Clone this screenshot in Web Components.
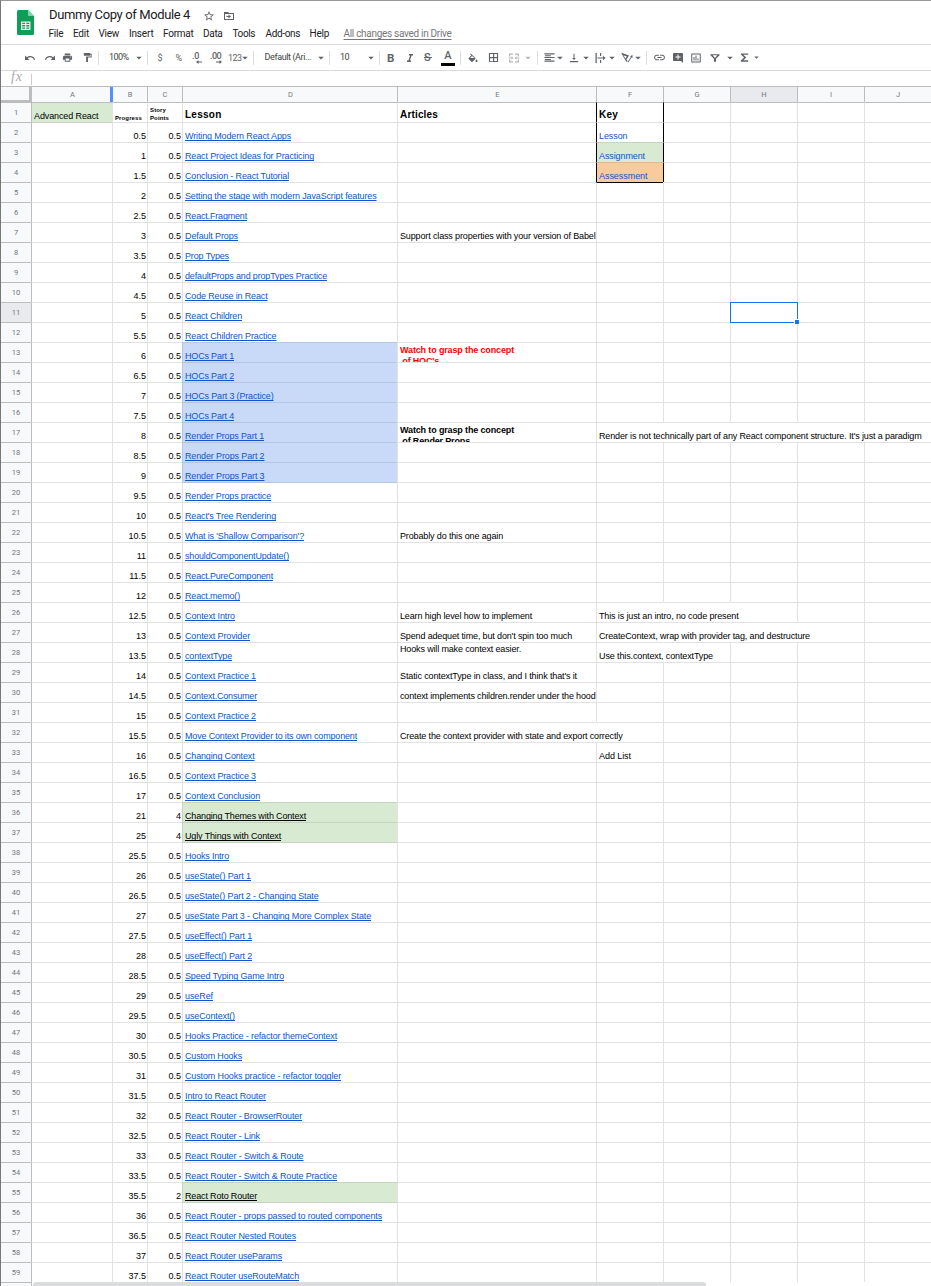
<!DOCTYPE html>
<html lang="en">
<head>
<meta charset="utf-8">
<title>Dummy Copy of Module 4</title>
<style>
html,body{margin:0;padding:0;background:#fff}
body{width:931px;height:1286px;overflow:hidden;font-family:"Liberation Sans",Arial,sans-serif}
</style>
</head>
<body>
<sheet-app></sheet-app>
<script>
const make = (host, html) => { const r = host.attachShadow({mode:'open'}); r.innerHTML = html; return r; };

/* Text run whose tracking is tuned to a fixed advance width. */
class FitText extends HTMLElement {
  connectedCallback(){
    if(!this.shadowRoot) make(this, `<style>:host{display:inline-block;white-space:pre}</style><slot></slot>`);
    const w = +this.getAttribute('w'); if(!w) return;
    this.style.letterSpacing = '0px';
    const nat = this.getBoundingClientRect().width, n = this.textContent.length;
    this.style.letterSpacing = ((w - nat) / n).toFixed(4) + 'px';
  }
}
customElements.define('fit-text', FitText);

const ICONS = {
  undo:'<path d="M12.5 8c-2.65 0-5.05.99-6.9 2.6L2 7v9h9l-3.62-3.62c1.39-1.16 3.16-1.88 5.12-1.88 3.54 0 6.55 2.31 7.6 5.5l2.37-.78C21.08 11.03 17.15 8 12.5 8z"/>',
  redo:'<path d="M18.4 10.6C16.55 8.99 14.15 8 11.5 8c-4.65 0-8.58 3.03-9.96 7.22L3.9 16c1.05-3.19 4.05-5.5 7.6-5.5 1.95 0 3.73.72 5.12 1.88L13 16h9V7l-3.6 3.6z"/>',
  print:'<path d="M19 8H5c-1.66 0-3 1.34-3 3v6h4v4h12v-4h4v-6c0-1.66-1.34-3-3-3zm-3 11H8v-5h8v5zm3-7c-.55 0-1-.45-1-1s.45-1 1-1 1 .45 1 1-.45 1-1 1zm-1-9H6v4h12V3z"/>',
  paint:'<path d="M18 4V3c0-.55-.45-1-1-1H5c-.55 0-1 .45-1 1v4c0 .55.45 1 1 1h12c.55 0 1-.45 1-1V6h1v4H9v11c0 .55.45 1 1 1h2c.55 0 1-.45 1-1v-9h8V4h-3z"/>',
  italic:'<path d="M10 4v3h2.2l-3.4 10H6v3h8v-3h-2.2l3.4-10H18V4z"/>',
  fill:'<path d="M16.56 8.94L7.62 0 6.21 1.41l2.38 2.38-5.15 5.15c-.59.59-.59 1.54 0 2.12l5.5 5.5c.29.29.68.44 1.06.44s.77-.15 1.06-.44l5.5-5.5c.59-.58.59-1.53 0-2.12zM6.500 9L10 5.21 14.79 9H6.500zM19 11.5s-2 2.17-2 3.5c0 1.1.9 2 2 2s2-.9 2-2c0-1.33-2-3.5-2-3.5z" transform="translate(0 3)"/>',
  borders:'<path d="M2 2v20h20V2H2zm9 18H4.500v-6.500H11V20zm0-9H4.500V4.500H11V11zm8.500 8.500h-6v-6h6v6zm0-8.500h-6V4.500h6V11z"/>',
  merge:'<path d="M2 3h8v2.500H4.500V9H2zM14 3h8v6h-2.500V5.500H14zM2 15h2.500v3.500H10V21H2zM19.500 15H22v6h-8v-2.500h5.500zM1 11h6V8.500l4 3.500-4 3.500V13H1zM23 11h-6V8.500L13 12l4 3.500V13h6z"/>',
  left:'<path d="M15 15H2v2.400h13zM15 7H2v2.400h13zM1 13.200h22v-2.400H1zM1 21.200h22v-2.400H1zM1 2.800v2.400h22V2.800z"/>',
  valign:'<path d="M16.500 12H13.200V2h-2.400v10H7.500l4.500 5zM2 19v3h20v-3z"/>',
  wrap:'<path d="M3 2h2.500v20H3zM12 2h2.300v6H12zM12 16h2.300v6H12zM7 11h11V7.500l5 4.500-5 4.500V13H7z"/>',
  rotate:'<path d="M1 3l10 17 2-1.500-2-3.500 5-8 -15-5.500zM5 6.500l6.500 2.500-2.700 4zM13 20l7-10-2-1.300 5-2.700v6l-1.700-1.200-6.500 9.500z"/>',
  link:'<path d="M3.900 12c0-1.710 1.390-3.100 3.100-3.100h4V7H7c-2.760 0-5 2.240-5 5s2.240 5 5 5h4v-1.900H7c-1.710 0-3.100-1.390-3.100-3.100zM8 13h8v-2H8v2zm9-6h-4v1.900h4c1.710 0 3.100 1.390 3.100 3.100s-1.390 3.100-3.100 3.100h-4V17h4c2.760 0 5-2.240 5-5s-2.240-5-5-5z"/>',
  comment:'<path d="M22 4c0-1.100-.9-2-2-2H4c-1.100 0-2 .9-2 2v12c0 1.100.9 2 2 2h14l4 4V4zM17 11h-4v4h-2v-4H7V9h4V5h2v4h4v2z"/>',
  chart:'<path d="M9 17H7v-7h2v7zm4 0h-2V7h2v10zm4 0h-2v-4h2v4zm2.500 2.100h-15V5h15v14.100zm0-16.100h-15c-1.100 0-2 .9-2 2v14c0 1.100.9 2 2 2h15c1.100 0 2-.9 2-2V5c0-1.100-.9-2-2-2z"/>',
  filter:'<path fill-rule="evenodd" d="M1 3h22v2.500L14.500 14v7h-5v-7L1 5.500zM6.500 5.500L12 12l5.500-6.500z"/>',
  sigma:'<path d="M20 3H4v2.500l7 6.500-7 6.500V21h16v-3H9.500l6.500-6-6.500-6H20z"/>',
  arrow:'<path d="M1 7h22L12 18z"/>',
  star:'<path d="M22 9.240l-7.190-.62L12 2 9.190 8.630 2 9.240l5.460 4.730L5.820 21 12 17.270 18.180 21l-1.630-7.030L22 9.240zM12 15.400l-3.760 2.270 1-4.280-3.320-2.880 4.380-.38L12 6.100l1.710 4.040 4.380.38-3.320 2.880 1 4.280L12 15.400z"/>',
  folder:'<path fill-rule="evenodd" d="M2 4h8l2 2h10v14H2zM4 8v10h16V8zM11 9l5 4-5 4v-3H7v-2h4z"/>'
};
class ToolIcon extends HTMLElement {
  connectedCallback(){
    const s = this.getAttribute('size') || 12;
    make(this, `<style>:host{display:block;flex:none;width:${s}px;height:${s}px}svg{display:block;fill:currentColor}</style>
      <svg width="${s}" height="${s}" viewBox="0 0 24 24">${ICONS[this.getAttribute('name')]}</svg>`);
  }
}
customElements.define('tool-icon', ToolIcon);

class DocHeader extends HTMLElement {
  connectedCallback(){
    const menu = [['File',15,9.500],['Edit',16,9.500],['View',20.500,10],['Insert',24.500,9.500],['Format',30.500,9.500],['Data',19.500,10],['Tools',22.500,10.500],['Add-ons',34.500,9.500],['Help',19.500,14.500]];
    make(this, `<style>
      :host{display:flex;height:43px;border-bottom:1px solid #dadada;font-family:Roboto,sans-serif;color:#202124}
      .logo{flex:none;width:17px;height:25px;margin:9px 15px 0 16px}
      .main{display:flex;flex-direction:column}
      .title{display:flex;align-items:center;height:20px;padding-top:4px;font-size:13px;line-height:20px}
      .title tool-icon{color:#5f6368}
      tool-icon[name=star]{margin:2px 8px 0 13px}
      tool-icon[name=folder]{margin-top:2px}
      nav{display:flex;font-size:10px;line-height:14px;padding-top:2px;margin-left:-.5px}
      .saved{color:#777;text-decoration:underline;text-decoration-skip-ink:none;text-underline-offset:2px}
      </style>
      <svg class="logo" viewBox="0 0 17 25"><path fill="#0f9d58" d="M1.500 0H11l6 6v17.500a1.500 1.500 0 0 1-1.500 1.500h-14A1.500 1.500 0 0 1 0 23.500v-22A1.500 1.500 0 0 1 1.500 0z"/><path fill="#87ceac" d="M11 0l6 6h-5a1 1 0 0 1-1-1z"/><path fill="#f1f1f1" fill-rule="evenodd" d="M4 11.500h9.500v8.500H4zM5.200 12.700v1.300h2.900v-1.300zm4.100 0v1.300h3v-1.300zM5.200 15.100v1.300h2.900v-1.300zm4.100 0v1.300h3v-1.300zM5.200 17.500v1.300h2.900v-1.300zm4.100 0v1.300h3v-1.300z"/></svg>
      <div class="main"><div class="title"><fit-text w="141">Dummy Copy of Module 4</fit-text><tool-icon name="star" size="12"></tool-icon><tool-icon name="folder" size="12"></tool-icon></div>
      <nav>${menu.map(([t,w,g])=>`<fit-text w="${w}" style="margin-right:${g}px">${t}</fit-text>`).join('')}<fit-text class="saved" w="108">All changes saved in Drive</fit-text></nav></div>`);
  }
}
customElements.define('doc-header', DocHeader);

class ToolBar extends HTMLElement {
  connectedCallback(){
    const i=(g,n,s=12,c='')=>`<tool-icon name="${n}" size="${s}" class="${c}" style="margin-left:${g}px"></tool-icon>`;
    const a=(g,c='')=>i(g,'arrow',6,c);
    const s=g=>`<i class="sep" style="margin-left:${g}px"></i>`;
    const t=(g,x,w,c='')=>`<fit-text class="${c}" w="${w}" style="margin-left:${g}px">${x}</fit-text>`;
    make(this, `<style>
      :host{display:flex;align-items:center;height:25px;border-bottom:1px solid #dadada;padding-left:23px;font:9px/12px Roboto,sans-serif;color:#5f6368}
      .sep{flex:none;width:1px;height:14px;background:#dadce0}
      .faint{opacity:.45}
      .up{margin-top:-2px;color:#444}
      .dec{display:flex;flex-direction:column;align-items:flex-end;line-height:8px;height:12px;font-weight:500}
      .dec svg{display:block}
      .b{font-size:11.500px;font-weight:700}
      .strike{text-decoration:line-through;font-weight:500;font-size:11px}
      .color{display:flex;flex-direction:column;align-items:center;box-sizing:border-box;width:14px;height:16px;font-size:11px;line-height:11px;font-weight:500;border-bottom:3px solid #000}
      </style>
      ${i(0,'undo')}${i(8,'redo')}${i(6,'print',11)}${i(9,'paint',11)}${s(5)}${t(10,'100%',19.500,'up')}${a(7.500)}${s(5)}
      ${t(9.500,'$',5.500)}${t(12.500,'%',7)}
      <span class="dec" style="margin-left:9.500px"><fit-text w="7">.0</fit-text><svg width="6" height="4" style="margin-right:-3px"><path d="M0 2l2.500-2v1.500H6v1H2.500V4z" fill="#5f6368"/></svg></span>
      <span class="dec" style="margin-left:11px"><fit-text w="11">.00</fit-text><svg width="6" height="4" style="margin-right:-1px"><path d="M6 2L3.500 0v1.500H0v1h3.500V4z" fill="#5f6368"/></svg></span>
      ${t(7,'123',13.500)}${a(.5)}${s(5)}${t(10.500,'Default (Ari...',46.500,'up')}${a(7)}${s(5)}
      ${t(10,'10',9,'up')}${a(19)}${s(5)}${t(7,'B',8,'b')}${i(9,'italic',12)}${t(8,'S',8,'strike')}
      <span class="color" style="margin-left:9px">A</span>${s(5)}${i(6,'fill')}${i(9,'borders',11)}${i(8.500,'merge',12,'faint')}${a(5.500,'faint')}${s(6)}
      ${i(5.500,'left',11)}${a(2.500)}${i(6,'valign',10)}${a(4)}${i(5,'wrap',12)}${a(3)}${i(5.500,'rotate',12)}${a(2.500)}${s(5)}
      ${i(5.500,'link',13)}${i(6.500,'comment',12)}${i(6,'chart',12)}${i(8,'filter',10)}${a(7)}${i(6,'sigma',11)}${i(4,'arrow',5)}`);
  }
}
customElements.define('tool-bar', ToolBar);

class FormulaBar extends HTMLElement {
  connectedCallback(){
    make(this, `<style>:host{display:flex;align-items:center;height:15px;padding-left:10px;color:#aaa;font:italic 14px/14px "Liberation Serif",serif}
      i{width:1px;height:11px;background:#ccc;margin-left:8px;margin-top:1px}fit-text{margin-top:-3px}</style><fit-text w="12">fx</fit-text><i></i>`);
  }
}
customElements.define('formula-bar', FormulaBar);

const COLS = 'ABCDEFGHIJ'.split('');
const TRACKS = '30px 81px 35px 35px 215px 199px 67px 67px 67px 67px 67px';

class ColumnHeads extends HTMLElement {
  connectedCallback(){
    make(this, `<style>:host{display:grid;grid-template-columns:${TRACKS};height:15px;border-top:1px solid #bdbdbd;background:#f8f9fa;font:7.500px/16px Roboto,sans-serif;color:#777;text-align:center}
      div{box-sizing:border-box;border-left:1px solid #bdbdbd}
      .corner{border-left:0;border-right:2px solid #bdbdbd;border-bottom:3px solid #bdbdbd}
      .A{border-right:2px solid #4d90fe;padding-left:3px}.B{border-left-color:#4d90fe}.D,.E{padding-left:1px}.H{background:#e8eaed}</style>
      <div class="corner"></div>${COLS.map(c=>`<div class="${c}">${c}</div>`).join('')}`);
  }
}
customElements.define('column-heads', ColumnHeads);

class SheetCell extends HTMLElement {
  connectedCallback(){
    make(this, `<style>
      :host{display:flex;box-sizing:border-box;height:20px;min-width:0;border:0 solid #e2e2e2;border-width:1px 0 0 1px;padding-left:2px;white-space:pre;align-items:flex-end;font-size:9px;line-height:12px;color:#000}
      :host([head]){justify-content:center;align-items:center;border-left:0;border-color:#bdbdbd;background:#f8f9fa;color:#70757a;font:7.500px/10px Roboto,sans-serif;padding:0}
      :host([head=on]){background:#e8eaed}
      :host([num]){justify-content:flex-end;padding-right:1px}
      :host([fill=green]){background:#d9ead3}:host([fill=blue]){background:#c9daf8}:host([fill=orange]){background:#f9cb9c}
      :host([link]) ::slotted(*),:host([keyed]){color:#1155cc}
      :host([link]) ::slotted(*){text-decoration:underline;text-decoration-skip-ink:none;text-underline-offset:1px;text-decoration-thickness:1px}
      :host([link=dark]) ::slotted(*){color:#000}
      :host([title1]){font-weight:700;font-size:10px;padding-bottom:1px}
      :host([tiny]){font-weight:700;font-size:6px;line-height:8px}
      :host([clip]){align-items:flex-start;font-weight:700;line-height:11px;overflow:hidden;padding-top:2px}
      :host([high]){align-items:flex-start}
      </style><slot></slot>`);
  }
}
customElements.define('sheet-cell', SheetCell);

class SheetRow extends HTMLElement {
  constructor(){ super(); make(this, `<style>:host{display:grid;grid-template-columns:${TRACKS};height:20px}</style><slot></slot>`); }
}
customElements.define('sheet-row', SheetRow);

const LESSONS = [['Writing Modern React Apps',291],['React Project Ideas for Practicing',314],['Conclusion - React Tutorial',289],['Setting the stage with modern JavaScript features',376.500],['React.Fragment',247],['Default Props',238],['Prop Types',229],['defaultProps and propTypes Practice',327],['Code Reuse in React',267.500],['React Children',242],['React Children Practice',276.500],['HOCs Part 1',234],['HOCs Part 2',234],['HOCs Part 3 (Practice)',273.500],['HOCs Part 4',234],['Render Props Part 1',264],['Render Props Part 2',264.500],['Render Props Part 3',264.500],['Render Props practice',271],["React's Tree Rendering",276],["What is 'Shallow Comparison'?",304],['shouldComponentUpdate()',289],['React.PureComponent',273],['React.memo()',240],['Context Intro',235],['Context Provider',250],['contextType',232],['Context Practice 1',256],['Context.Consumer',257],['Context Practice 2',256],['Move Context Provider to its own component',357],['Changing Context',254.500],['Context Practice 3',256],['Context Conclusion',260],['Changing Themes with Context',306],['Ugly Things with Context',281],['Hooks Intro',229],['useState() Part 1',251],['useState() Part 2 - Changing State',318.500],['useState Part 3 - Changing More Complex State',371],['useEffect() Part 1',252],['useEffect() Part 2',252],['Speed Typing Game Intro',284],['useRef',213],['useContext()',235],['Hooks Practice - refactor themeContext',337],['Custom Hooks',242],['Custom Hooks practice - refactor toggler',341],['Intro to React Router',266],['React Router - BrowserRouter',302],['React Router - Link',260],['React Router - Switch & Route',303.500],['React Router - Switch & Route Practice',337],['React Roto Router',257],['React Router - props passed to routed components',382],['React Router Nested Routes',296],['React Router useParams',282],['React Router useRouteMatch',299]];
const POINTS = {36:4,37:4,55:2};
const EXTRA = {
  E7:['Support class properties with your version of Babel',195.500],
  E13:['Watch to grasp the concept',114," of HOC's",39,'clip','red'],
  E17:['Watch to grasp the concept',114,' of Render Props',70,'clip'],
  F17:["Render is not technically part of any React component structure. It's just a paradigm",322.500],
  E22:['Probably do this one again',103],E26:['Learn high level how to implement',132],F26:['This is just an intro, no code present',139.500],
  E27:["Spend adequet time, but don't spin too much",172],F27:['CreateContext, wrap with provider tag, and destructure',211],
  E28:['Hooks will make context easier.',121],F28:['Use this.context, contextType',114],
  E29:["Static contextType in class, and I think that's it",177],E30:['context implements children.render under the hood',195.500],
  E32:['Create the context provider with state and export correctly',222.500],F33:['Add List',32]
};
/* Cells whose left grid line is covered by text running over from the left. */
const HIDDEN = ['G17','H17','I17','J17','G26','H26','G27','H27','I27','G28','F32'];
const fillOf = (c,r) => c==='D' ? (r>=13&&r<=19?'blue':[36,37,55].includes(r)?'green':'') : c==='F' ? (r===3?'green':r===4?'orange':'') : c==='A'&&r===1?'green':'';
const EDGE = {green:'#c5d4bf',blue:'#b6c6e1',orange:'#e2b88e'};

class SheetGrid extends HTMLElement {
  connectedCallback(){
    let total = 0, html = '';
    const fit = (t,w)=>`<fit-text w="${w}">${t.replace('&','&amp;')}</fit-text>`;
    for(let r=1;r<=59;r++){
      html += `<sheet-row><sheet-cell head${r===11?'=on':''}>${r}</sheet-cell>`;
      const pts = POINTS[r]||0.5; if(r>1) total += pts;
      for(const c of COLS){
        const k=c+r, f=fillOf(c,r), up=r>1&&fillOf(c,r-1); let at='', st='', body='';
        if(f){ at+=` fill="${f}"`; st+=`border-color:${EDGE[f]};`; }
        else if(up) st+=`border-top-color:${EDGE[up]};`;
        if(c==='A') st+='border-left-color:#bdbdbd;';
        if(r===1) st+='border-top-color:#bdbdbd;';
        if(HIDDEN.includes(k)) st+='border-left-color:transparent;';
        if((c==='F'||c==='G')&&r<=4) st+='border-left-color:#000;';
        if(c==='F'&&r===5) st+='border-top-color:#000;border-left-color:#e2e2e2;';
        if(r===1){
          if(c==='A') body=fit('Advanced React',64.500);
          if(c==='B'){at+=' tiny';body=fit('Progress',27);}
          if(c==='C'){at+=' tiny';body=`<div>${fit('Story',16)}<br>${fit('Points',19)}</div>`;}
          if(c==='D'){at+=' title1';body=fit('Lesson',36.500);}
          if(c==='E'){at+=' title1';body=fit('Articles',38);}
          if(c==='F'){at+=' title1';body=fit('Key',19);}
        } else {
          if(c==='B'){at+=' num';body=total;}
          if(c==='C'){at+=' num';body=pts;}
          if(c==='D'){const [t,x]=LESSONS[r-2];at+=` link="${POINTS[r]?'dark':'blue'}"`;body=fit(t,x-185);}
          if(c==='F'&&r<5){at+=' keyed';body=[fit('Lesson',28.500),fit('Assignment',46),fit('Assessment',48.500)][r-2];}
        }
        const e=EXTRA[k];
        if(e){ if(e[4]){at+=' clip'; if(e[5]) st+='color:red;'; body=`<div>${fit(e[0],e[1])}<br>${fit(e[2],e[3])}</div>`; } else body=fit(e[0],e[1]); }
        if(k==='E28') at+=' high';
        html += `<sheet-cell${at}${st?` style="${st}"`:''}>${body}</sheet-cell>`;
      }
      html += '</sheet-row>';
    }
    make(this, `<style>:host{display:block;position:relative}
      .sel{position:absolute;left:729px;top:200px;width:66px;height:19px;border:1px solid #1a73e8}
      .sel::after{content:"";position:absolute;right:-2px;bottom:-2px;width:4px;height:4px;background:#1a73e8;border:solid #fff;border-width:1px 0 0 1px}
      .foot{display:flex;height:4px;background:#fff}.foot span{box-sizing:border-box;background:#f8f9fa;border-right:1px solid #bdbdbd;border-top:1px solid #bdbdbd;width:31px}
      .foot b{width:673px;margin-left:1px;background:#dadce0;border-radius:3px 3px 0 0}</style>${html}<div class="sel"></div><div class="foot"><span></span><b></b></div>`);
  }
}
customElements.define('sheet-grid', SheetGrid);

class SheetApp extends HTMLElement {
  connectedCallback(){
    make(this, `<style>:host{display:block;box-sizing:border-box;width:931px;height:1286px;overflow:hidden;border-top:1px solid #999;border-left:1px solid #777;background:#fff}</style>
      <doc-header></doc-header><tool-bar></tool-bar><formula-bar></formula-bar><column-heads></column-heads><sheet-grid></sheet-grid>`);
  }
}
customElements.define('sheet-app', SheetApp);
</script>
</body>
</html>
